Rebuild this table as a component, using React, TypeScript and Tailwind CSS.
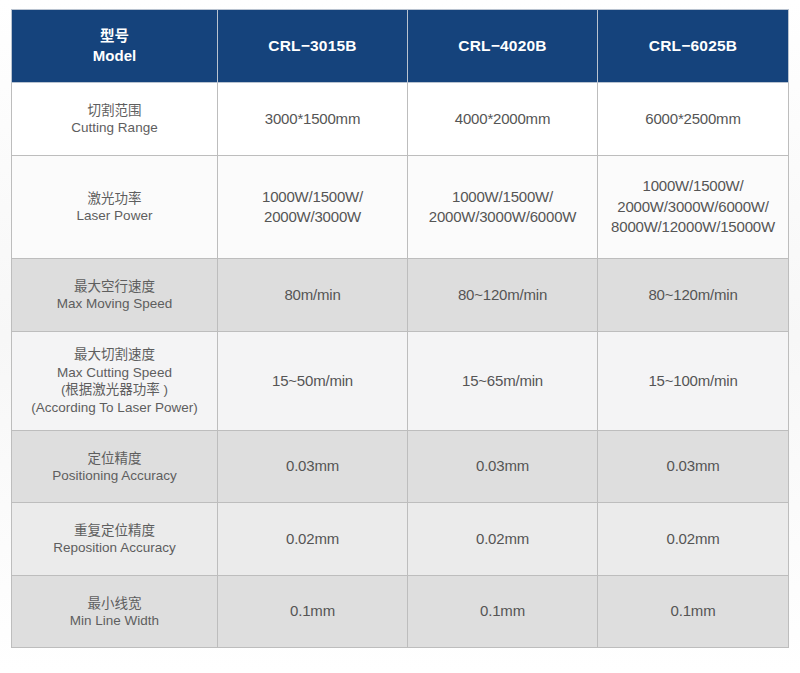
const models = ['CRL−3015B', 'CRL−4020B', 'CRL−6025B'];

type Row = {
  zh: string[];
  en: string[];
  values: string[][];
  height: string;
  bg: string;
};

const rows: Row[] = [
  {
    zh: ['切割范围'],
    en: ['Cutting Range'],
    values: [['3000*1500mm'], ['4000*2000mm'], ['6000*2500mm']],
    height: 'h-[73px]',
    bg: 'bg-white',
  },
  {
    zh: ['激光功率'],
    en: ['Laser Power'],
    values: [
      ['1000W/1500W/', '2000W/3000W'],
      ['1000W/1500W/', '2000W/3000W/6000W'],
      ['1000W/1500W/', '2000W/3000W/6000W/', '8000W/12000W/15000W'],
    ],
    height: 'h-[103px]',
    bg: 'bg-[#fbfbfb]',
  },
  {
    zh: ['最大空行速度'],
    en: ['Max Moving Speed'],
    values: [['80m/min'], ['80~120m/min'], ['80~120m/min']],
    height: 'h-[73px]',
    bg: 'bg-[#dddddd]',
  },
  {
    zh: [],
    en: [],
    values: [['15~50m/min'], ['15~65m/min'], ['15~100m/min']],
    height: 'h-[99px]',
    bg: 'bg-[#f4f4f5]',
  },
  {
    zh: ['定位精度'],
    en: ['Positioning Accuracy'],
    values: [['0.03mm'], ['0.03mm'], ['0.03mm']],
    height: 'h-[72px]',
    bg: 'bg-[#dedede]',
  },
  {
    zh: ['重复定位精度'],
    en: ['Reposition Accuracy'],
    values: [['0.02mm'], ['0.02mm'], ['0.02mm']],
    height: 'h-[73px]',
    bg: 'bg-[#ebebeb]',
  },
  {
    zh: ['最小线宽'],
    en: ['Min Line Width'],
    values: [['0.1mm'], ['0.1mm'], ['0.1mm']],
    height: 'h-[72px]',
    bg: 'bg-[#dedede]',
  },
];

function Label({ row, index }: { row: Row; index: number }) {
  // the cutting speed row mixes both languages on four lines
  if (index === 3) {
    return (
      <div className="flex flex-col items-center leading-[17.5px] text-[#5e5e5e]">
        <span className="text-[13.5px]">最大切割速度</span>
        <span className="text-[13.5px]">Max Cutting Speed</span>
        <span className="text-[13.5px]">(根据激光器功率 )</span>
        <span className="text-[13.5px]">(According To Laser Power)</span>
      </div>
    );
  }
  return (
    <div className="flex flex-col items-center leading-[17px] text-[#5e5e5e]">
      {row.zh.map((t) => (
        <span key={t} className="text-[13.5px]">
          {t}
        </span>
      ))}
      {row.en.map((t) => (
        <span key={t} className="text-[13.5px]">
          {t}
        </span>
      ))}
    </div>
  );
}

export default function App() {
  return (
    <main className="w-[800px] h-[673px] bg-gradient-to-b from-white via-[#f7f7f7] to-white pt-[9px] pl-[11px] font-['Liberation_Sans','Noto_Sans_CJK_SC',sans-serif]">
      <table className="table-fixed border-collapse w-[777px]">
        <colgroup>
          <col className="w-[206px]" />
          <col className="w-[190px]" />
          <col className="w-[190px]" />
          <col className="w-[191px]" />
        </colgroup>
        <thead>
          <tr className="h-[73px] bg-[#15437c] text-white">
            <th className="border border-[#b9c3d0] font-bold text-[15px] leading-[20px]">
              <div className="flex flex-col items-center">
                <span className="text-[14.5px]">型号</span>
                <span>Model</span>
              </div>
            </th>
            {models.map((m) => (
              <th
                key={m}
                className="border border-[#b9c3d0] font-bold text-[15.5px] tracking-[0.2px]"
              >
                {m}
              </th>
            ))}
          </tr>
        </thead>
        <tbody>
          {rows.map((row, i) => (
            <tr key={i} className={`${row.height} ${row.bg}`}>
              <td className="border border-[#bdbdbd] text-center">
                <Label row={row} index={i} />
              </td>
              {row.values.map((v, j) => (
                <td
                  key={j}
                  className="border border-[#bdbdbd] text-center text-[15px] leading-[20.5px] text-[#555555] tracking-[-0.2px]"
                >
                  {v.map((line) => (
                    <div key={line}>{line}</div>
                  ))}
                </td>
              ))}
            </tr>
          ))}
        </tbody>
      </table>
    </main>
  );
}
